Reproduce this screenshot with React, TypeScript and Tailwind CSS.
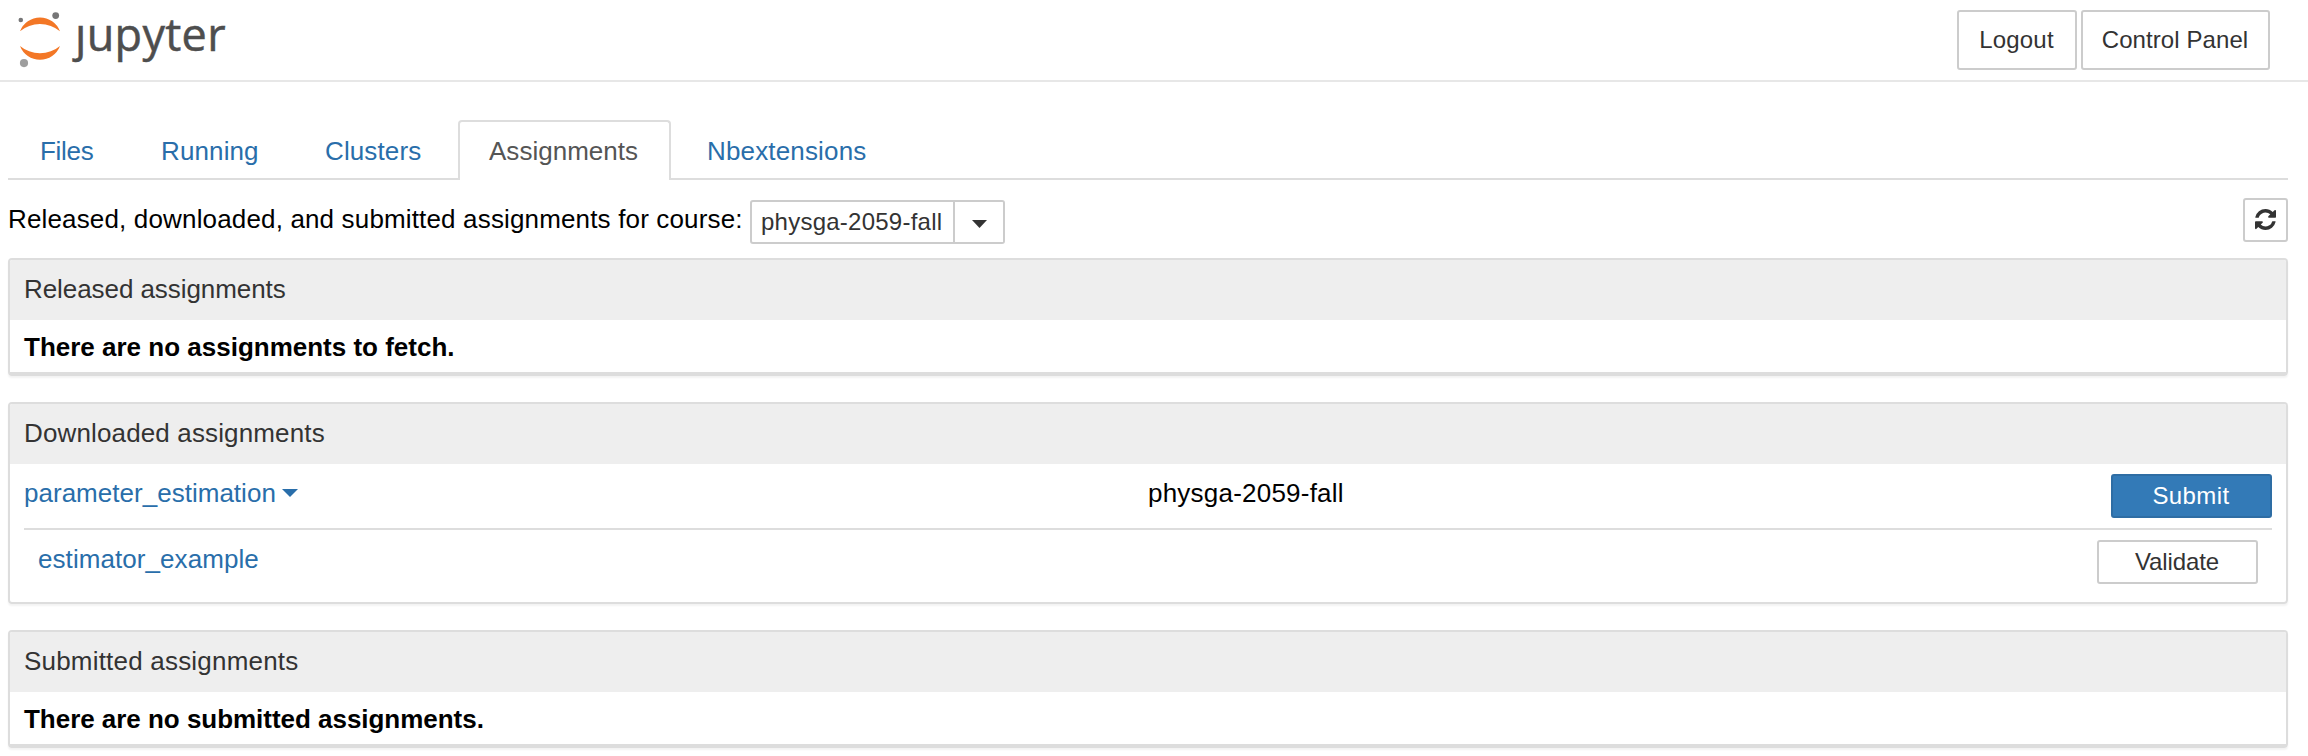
import type { ReactNode } from 'react';

function JupyterLogo() {
  return (
    <div className="flex pl-[17px]">
      <svg className="mt-2.5 h-[60px] w-[58px]" viewBox="17 10 58 60">
        <path d="M20 31.2A21.4 21.4 0 0 1 60 31.2A29 26 0 0 0 20 31.2Z" fill="#F37726" />
        <path d="M20 46A21.4 21.4 0 0 0 60 46A29 26 0 0 1 20 46Z" fill="#F37726" />
        <circle cx="20.8" cy="20" r="2.3" fill="#767677" />
        <circle cx="55.7" cy="15.6" r="3.4" fill="#767677" />
        <circle cx="24" cy="63.1" r="4.1" fill="#9E9E9E" />
      </svg>
      <span className="h-[80px] font-['Open_Sans',sans-serif] text-[45px] leading-[68px] tracking-[0.3px] text-[#4e4e4e] [-webkit-text-stroke:0.5px_#4e4e4e]">
        ȷupyter
      </span>
    </div>
  );
}

function RefreshIcon() {
  return (
    <svg className="h-[21px] w-[21px]" viewBox="0 0 1536 1536" fill="#333333">
      <path d="M1511 928q0 5-1 7-64 268-268 434.500t-478 166.500q-146 0-282.500-55t-243.500-157l-129 129q-19 19-45 19t-45-19-19-45v-448q0-26 19-45t45-19h448q26 0 45 19t19 45-19 45l-137 137q71 66 161 102t187 36q134 0 250-65t186-179q11-17 53-117 8-23 30-23h192q13 0 22.500 9.500t9.500 22.500zM1536 128v448q0 26-19 45t-45 19h-448q-26 0-45-19t-19-45 19-45l138-138q-148-137-349-137-134 0-250 65t-186 179q-11 17-53 117-8 23-30 23h-199q-13 0-22.500-9.500t-9.500-22.500v-7q65-268 270-434.500t480-166.500q146 0 284 55.500t245 156.500l130-129q19-19 45-19t45 19 19 45z" />
    </svg>
  );
}

function Caret({ className }: { className: string }) {
  return (
    <svg className={className} viewBox="0 0 16 8" preserveAspectRatio="none" fill="currentColor">
      <path d="M0 0H16L8 8Z" />
    </svg>
  );
}

function Tab({ className, children }: { className: string; children: ReactNode }) {
  return (
    <a className={`h-[60px] border-b-2 border-[#dddddd] pt-[13px] text-[#296eaa] ${className}`}>{children}</a>
  );
}

function Panel({ title, titleClass, className, children }: { title: string; titleClass: string; className: string; children: ReactNode }) {
  return (
    <section
      className={`overflow-hidden rounded-[4px] border-2 border-[#dddddd] shadow-[0_2px_2px_rgba(0,0,0,0.05)] ${className}`}
    >
      <h2 className={`h-[60px] bg-[#eeeeee] pt-[11px] pl-3.5 text-[#333333] ${titleClass}`}>{title}</h2>
      {children}
    </section>
  );
}

export default function App() {
  return (
    <div className="h-[756px] overflow-hidden bg-white font-['Liberation_Sans',Arial,sans-serif] text-[26px] leading-[36px] text-black">
      <header className="flex h-[82px] justify-between border-b-2 border-[#e7e7e7]">
        <JupyterLogo />
        <div className="flex gap-1 pt-2.5 pr-[38px] text-[24px] text-[#333333]">
          <button className="h-[60px] w-[120px] rounded-[3px] border-2 border-[#cccccc] pt-px pr-px pb-px tracking-[0.19px]">Logout</button>
          <button className="h-[60px] w-[189px] rounded-[3px] border-2 border-[#cccccc] pt-px pr-px pb-px tracking-[0.08px]">
            Control Panel
          </button>
        </div>
      </header>

      <main className="pt-[38px] pr-5 pl-2">
        <nav className="flex">
          <Tab className="w-[120px] pl-8 tracking-[-0.3px]">Files</Tab>
          <Tab className="w-[165px] pl-[33px] tracking-[0.12px]">Running</Tab>
          <Tab className="w-[165px] pl-8 tracking-[0.12px]">Clusters</Tab>
          <a className="h-[60px] w-[213px] rounded-t-[4px] border-2 border-b-0 border-[#dddddd] pt-[11px] pl-[29px] tracking-[0.02px] text-[#555555]">
            Assignments
          </a>
          <Tab className="flex-1 pl-9 tracking-[0.16px]">Nbextensions</Tab>
        </nav>

        <div className="flex h-[78px] pt-[18px]">
          <span className="mt-[3px] w-[742px] whitespace-nowrap tracking-[0.155px]">
            Released, downloaded, and submitted assignments for course:
          </span>
          <div className="mt-[2px] flex h-[44px] text-[24px] text-[#333333]">
            <button className="w-[205px] rounded-l-[3px] border-2 border-[#cccccc] pb-px pl-[9px] text-left tracking-[0.24px]">
              physga-2059-fall
            </button>
            <button className="flex w-[50px] items-center justify-center rounded-r-[3px] border-2 border-l-0 border-[#cccccc] pt-1">
              <Caret className="h-2 w-[15px]" />
            </button>
          </div>
          <button className="ml-auto flex h-[44px] w-[45px] items-center justify-center rounded-[3px] border-2 border-[#cccccc] pb-px">
            <RefreshIcon />
          </button>
        </div>

        <Panel title="Released assignments" titleClass="tracking-[-0.07px]" className="h-[118px] border-b-4">
          <p className="pt-[9px] pl-3.5 font-bold">There are no assignments to fetch.</p>
        </Panel>

        <Panel title="Downloaded assignments" titleClass="tracking-[0.14px]" className="mt-[26px] h-[202px]">
          <div className="mx-3.5 flex h-[66px] border-b-2 border-[#dddddd] pt-[10px]">
            <a className="mt-px flex w-[1124px] tracking-[0.02px] text-[#296eaa]">
              parameter_estimation
              <Caret className="mt-[14px] ml-1.5 h-2 w-4" />
            </a>
            <span className="mt-px tracking-[0.22px]">physga-2059-fall</span>
            <button className="ml-auto h-[44px] w-[161px] rounded-[3px] border-2 border-[#2e6da4] bg-[#337ab7] pr-px pb-px text-[24px] tracking-[0.4px] text-white">
              Submit
            </button>
          </div>
          <div className="mx-3.5 flex justify-between pt-[10px] pr-3.5 pl-3.5">
            <a className="mt-px tracking-[0.07px] text-[#296eaa]">estimator_example</a>
            <button className="h-[44px] w-[161px] rounded-[3px] border-2 border-[#cccccc] pr-px pb-px text-[24px] tracking-[-0.12px] text-[#333333]">
              Validate
            </button>
          </div>
        </Panel>

        <Panel title="Submitted assignments" titleClass="tracking-[0.2px]" className="mt-[26px] h-[118px] border-b-4">
          <p className="pt-[9px] pl-3.5 font-bold tracking-[-0.03px]">There are no submitted assignments.</p>
        </Panel>
      </main>
    </div>
  );
}
